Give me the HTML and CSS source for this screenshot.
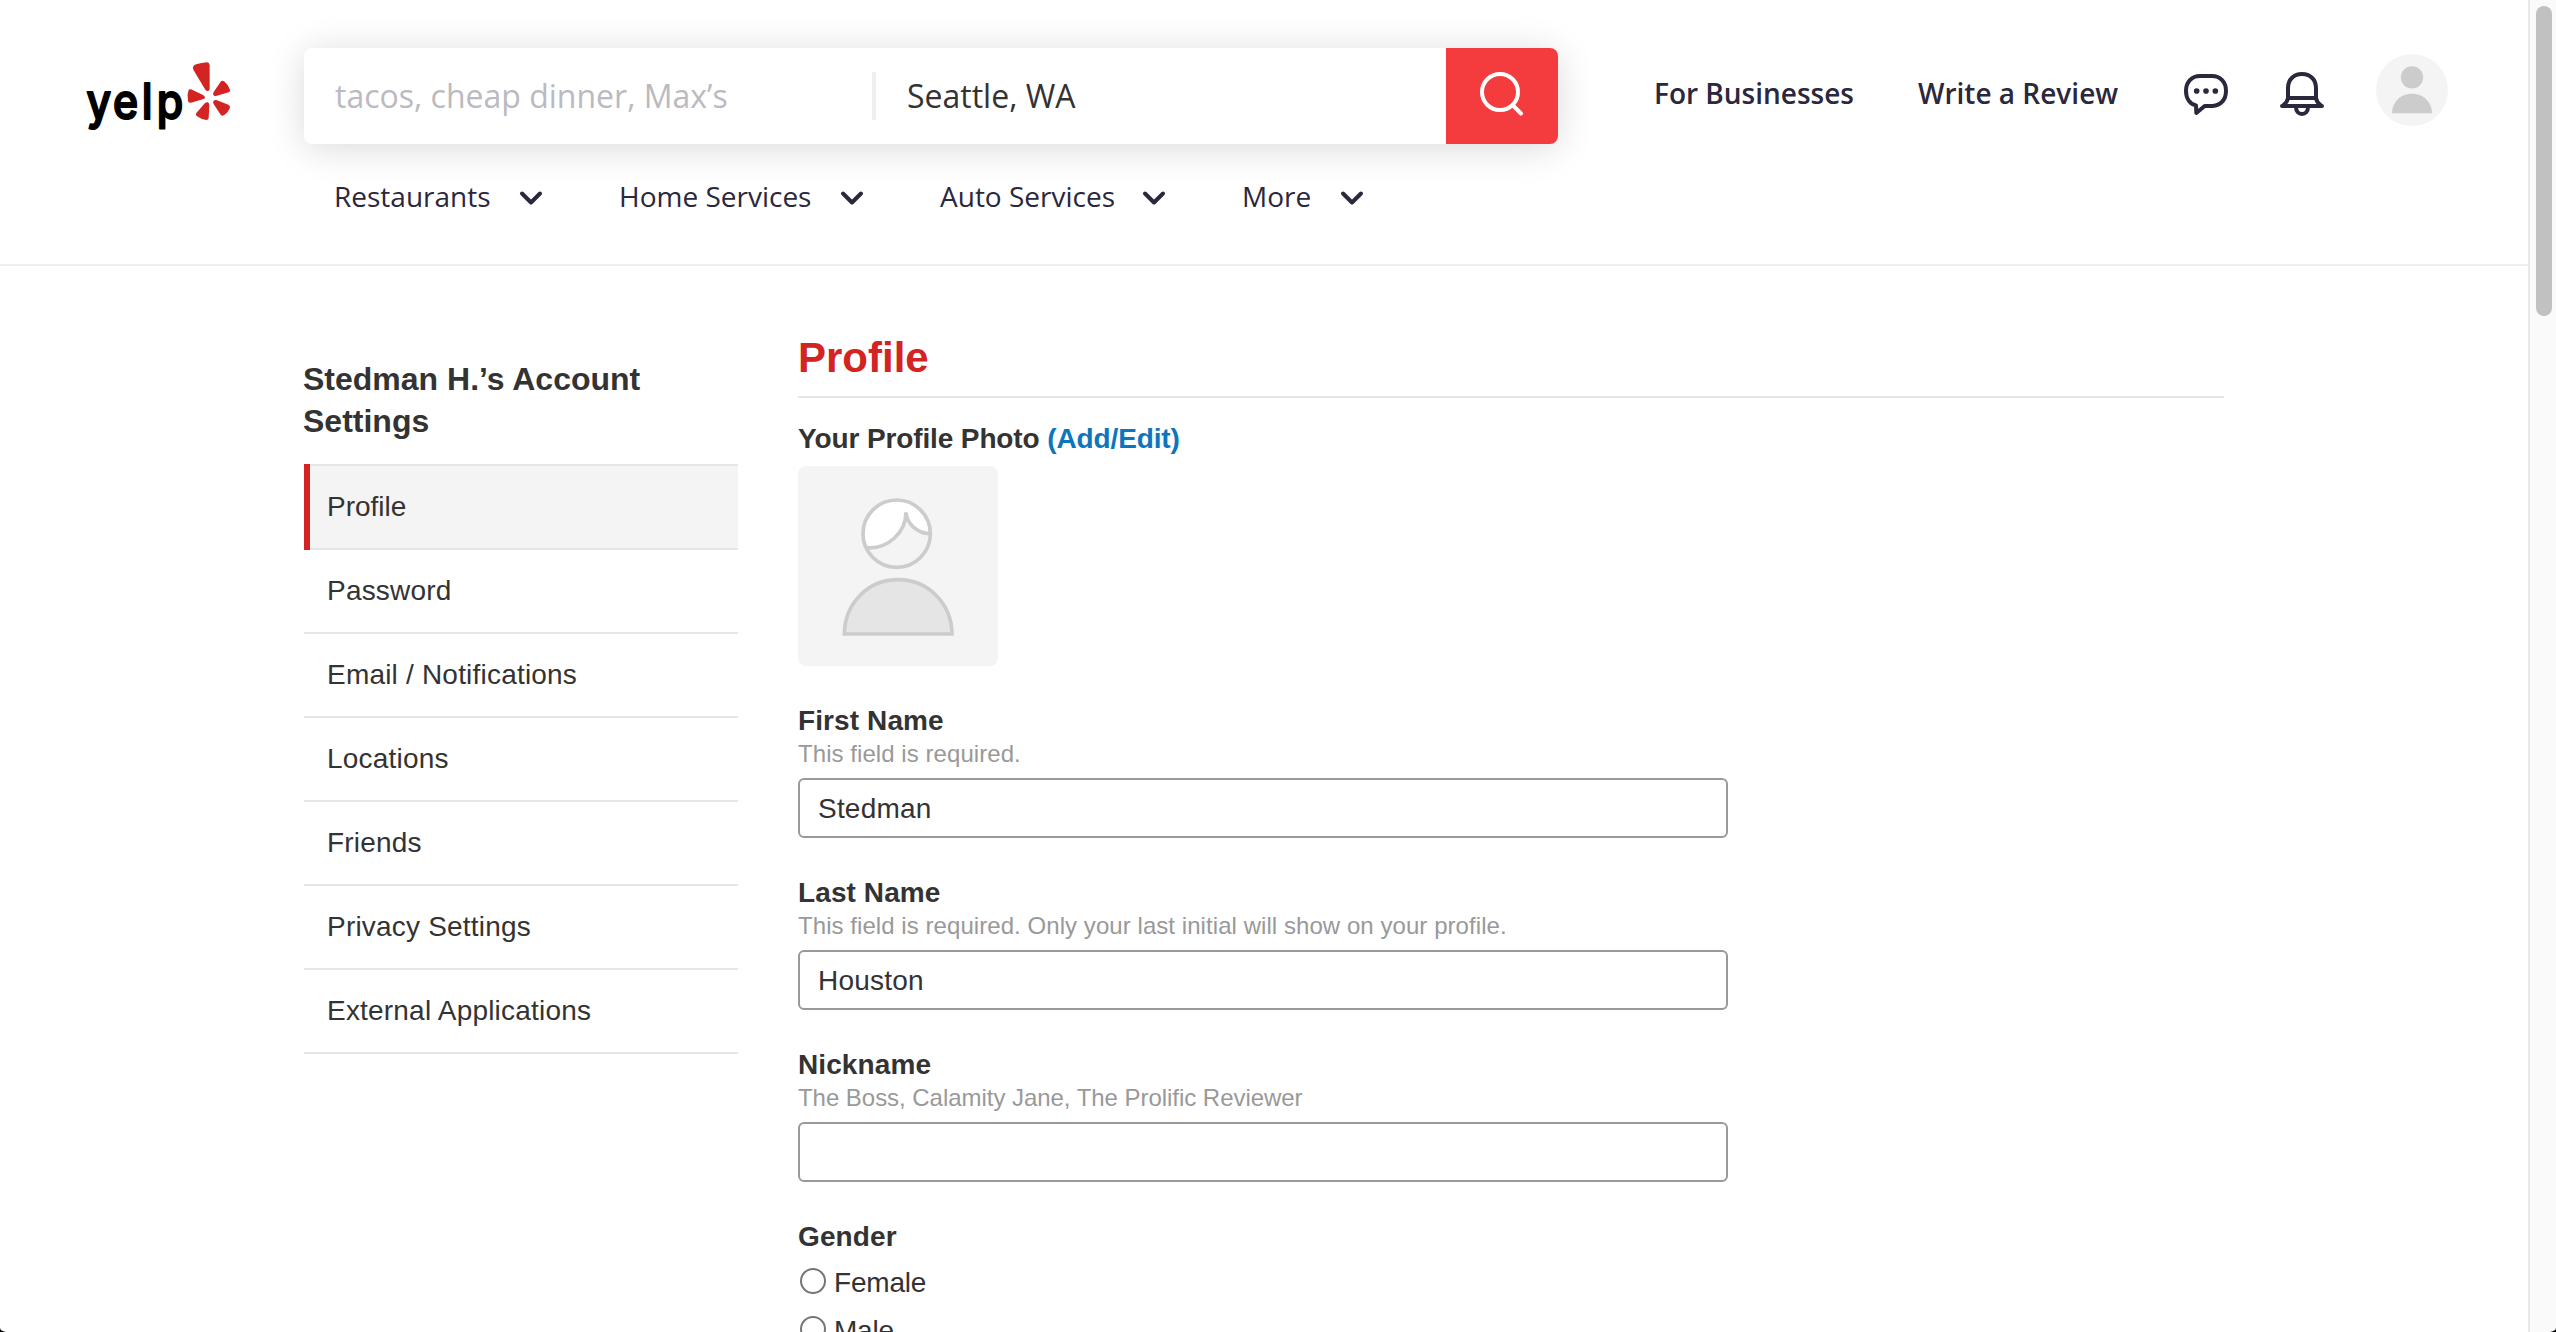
FILE: index.html
```
<!DOCTYPE html>
<html lang="en">
<head>
<meta charset="utf-8">
<title>Yelp - Account Settings</title>
<link rel="stylesheet" href="styles.css">
</head>
<body>
<div class="page">
  <header class="header">
    <a class="logo" aria-label="Yelp">
      <svg viewBox="72 90 444 216" width="148" height="72">
        <text class="logo-text" transform="scale(.88 1)" x="90 181 279 330" y="268">yelp</text>
        <g class="burst">
          <path d="M399 112Q400 106 408 103Q425 98 441 97Q448 97 449 105V176Q449 183 443 183Q439 183 436 179L400 119Q398 115 399 112Z"/>
          <path d="M386 179Q389 177 393 178L429 195Q435 198 435 203Q434 207 428 208L393 218Q386 220 384 213Q380 195 386 179Z"/>
          <path d="M483 154Q488 150 492 154Q504 163 510 179Q512 184 506 187L468 198Q462 199 460 195Q458 191 461 186Z"/>
          <path d="M460 214Q463 209 469 210L505 224Q511 227 510 233Q505 247 492 256Q486 259 482 254L461 222Q458 218 460 214Z"/>
          <path d="M435 219Q439 216 443 217Q448 219 448 225L446 264Q445 270 439 270Q422 267 410 258Q406 254 409 249Z"/>
        </g>
      </svg>
    </a>
    <div class="header-main">
      <form class="search">
        <span class="search-find">tacos, cheap dinner, Max’s</span>
        <span class="search-divider"></span>
        <span class="search-near">Seattle, WA</span>
        <button class="search-button" type="button" aria-label="Search">
          <svg viewBox="0 0 112 96" width="112" height="96" fill="none" stroke="#fff" stroke-width="4" stroke-linecap="round"><circle cx="54" cy="44" r="18"/><path d="M67 57.500l8 8"/></svg>
        </button>
      </form>
      <nav class="categories">
        <a class="category">Restaurants <svg class="chevron" viewBox="0 0 24 16"><path d="M3 3.500l9 9 9-9"/></svg></a>
        <a class="category">Home Services <svg class="chevron" viewBox="0 0 24 16"><path d="M3 3.500l9 9 9-9"/></svg></a>
        <a class="category">Auto Services <svg class="chevron" viewBox="0 0 24 16"><path d="M3 3.500l9 9 9-9"/></svg></a>
        <a class="category">More <svg class="chevron" viewBox="0 0 24 16"><path d="M3 3.500l9 9 9-9"/></svg></a>
      </nav>
    </div>
    <div class="user-bar">
      <a class="user-link">For Businesses</a>
      <a class="user-link review">Write a Review</a>
      <svg class="icon" viewBox="252 216 132 132"><path d="M300 228H336C361 228 378 246 378 272C378 300 361 317 338 318H314L289 339L288 316C270 312 258 296 258 272C258 246 275 228 300 228Z"/><g class="dots"><circle cx="290" cy="273" r="8.500"/><circle cx="318" cy="273" r="8.500"/><circle cx="346" cy="273" r="8.500"/></g></svg>
      <svg class="icon" viewBox="540 216 132 132"><path d="M564 294V264C564 238 582 222 606 222S648 238 648 264V294M564 294H648M564 294C563 302 558 310 549 317M648 294C649 302 654 310 663 317M546 318H666M588 322C588 334 596 342 606 342S624 334 624 322"/></svg>
      <svg class="avatar" viewBox="828 162 216 216"><circle cx="936" cy="270" r="108" fill="#f4f4f4"/><g fill="#ccc"><circle cx="936" cy="232" r="33.500"/><path d="M876 340C876 306 902 281 936 281S996 306 996 340Z"/></g></svg>
    </div>
  </header>
  <main class="content">
    <aside class="sidebar">
      <h2 class="sidebar-title">Stedman H.’s Account Settings</h2>
      <ul class="menu">
        <li class="menu-item active">Profile</li>
        <li class="menu-item">Password</li>
        <li class="menu-item">Email / Notifications</li>
        <li class="menu-item">Locations</li>
        <li class="menu-item">Friends</li>
        <li class="menu-item">Privacy Settings</li>
        <li class="menu-item">External Applications</li>
      </ul>
    </aside>
    <section class="profile">
      <h1 class="profile-title">Profile</h1>
      <div class="photo-label">Your Profile Photo <a class="link">(Add/Edit)</a></div>
      <svg class="photo" viewBox="54 438 600 600">
        <path fill="#fff" d="M260 684A101 101 0 1 1 451 640C414 639 381 611 378 577C377 640 322 690 260 684Z"/>
        <g fill="none" stroke="#ccc" stroke-width="11">
          <circle cx="350" cy="641" r="101"/>
          <path d="M260 683C323 688 378 638 378 577C381 611 411 640 449 641"/>
          <path fill="#e5e5e5" d="M193 942C194 851 263 779 354 779S515 851 516 942Z"/>
        </g>
      </svg>
      <div class="field">
        <label class="label" for="first">First Name</label>
        <span class="help">This field is required.</span>
        <input class="input" id="first" type="text" value="Stedman">
      </div>
      <div class="field">
        <label class="label" for="last">Last Name</label>
        <span class="help">This field is required. Only your last initial will show on your profile.</span>
        <input class="input" id="last" type="text" value="Houston">
      </div>
      <div class="field">
        <label class="label" for="nick">Nickname</label>
        <span class="help tight">The Boss, Calamity Jane, The Prolific Reviewer</span>
        <input class="input" id="nick" type="text">
      </div>
      <div class="field">
        <span class="label">Gender</span>
        <div class="options">
          <label class="option"><span class="radio"></span>Female</label>
          <label class="option"><span class="radio"></span>Male</label>
        </div>
      </div>
    </section>
  </main>
</div>
<div class="scrollbar"><div class="scrollbar-thumb"></div></div>
</body>
</html>
```
FILE: styles.css
```
* { box-sizing: border-box; }

body {
  display: flex;
  position: relative;
  height: 1332px;
  margin: 0;
  overflow: hidden;
  background: #fff;
  color: #333;
  font-family: "Liberation Sans", Arial, sans-serif;
  font-size: 28px;
}

/* rounded corners of the window */
body::before,
body::after {
  content: "";
  position: absolute;
  bottom: 0;
  width: 8px;
  height: 4px;
}
body::before { left: 0; background: radial-gradient(ellipse 8px 4px at 100% 0, transparent 90%, #000 110%); }
body::after { right: 0; background: radial-gradient(ellipse 8px 4px at 0 0, transparent 90%, #000 110%); }

.page { flex: 1; min-width: 0; }

/* header */
.header {
  display: flex;
  align-items: flex-start;
  height: 266px;
  padding-left: 84px;
  border-bottom: 2px solid #eee;
  color: #2b273c;
  font-family: "Open Sans", "Noto Sans", sans-serif;
}
.logo { width: 220px; padding-top: 60px; }
.logo svg { display: block; }
.logo-text {
  font: 500 146px Inter, sans-serif;
  fill: #000;
  stroke: #000;
  stroke-width: 6px;
  stroke-linejoin: round;
}
.burst { fill: #d32323; }
.header-main { width: 1254px; padding-top: 48px; }
.search {
  display: flex;
  align-items: center;
  height: 96px;
  border-radius: 8px;
  background: #fff;
  box-shadow: 0 4px 36px rgba(0, 0, 0, .15);
  font-size: 32px;
  line-height: 96px;
}
.search-find { width: 568px; padding-left: 31px; color: #bbbac0; }
.search-divider { width: 4px; height: 48px; background: #eee; }
.search-near { flex: 1; padding-left: 31px; color: #333; }
.search-button {
  width: 112px;
  height: 96px;
  padding: 0;
  border: 0;
  border-radius: 0 8px 8px 0;
  background: #f43c3f;
}
.search-button svg { display: block; }
.categories {
  display: grid;
  grid-template-columns: 285px 321px 302px 200px;
  padding: 32px 0 0 30px;
}
.category {
  display: flex;
  align-items: center;
  justify-content: space-between;
  padding-right: 76px;
  line-height: 40px;
}
.category:last-child { justify-content: flex-start; gap: 29px; }
.chevron {
  width: 24px;
  height: 16px;
  margin-top: 4px;
  fill: none;
  stroke: currentColor;
  stroke-width: 4px;
  stroke-linecap: round;
  stroke-linejoin: round;
}
.user-bar {
  display: flex;
  align-items: center;
  height: 188px;
  margin-left: 96px;
  font-weight: 600;
  line-height: 40px;
}
.user-link { padding-bottom: 2px; white-space: nowrap; }
.review { margin: 0 14px 0 64px; }
.icon {
  width: 44px;
  height: 44px;
  margin-left: 52px;
  fill: none;
  stroke: currentColor;
  stroke-width: 12px;
  stroke-linecap: round;
  stroke-linejoin: round;
}
.dots { fill: currentColor; stroke: none; }
.avatar { width: 72px; height: 72px; margin: 0 0 8px 52px; }

/* settings */
.content { display: flex; gap: 60px; padding: 64px 304px 0; }
.sidebar { width: 434px; padding-top: 28px; }
.sidebar-title { margin: 0 0 22px -1px; font-size: 32px; line-height: 42px; }
.menu { margin: 0; padding: 0; list-style: none; }
.menu-item {
  height: 84px;
  padding-left: 23px;
  border-bottom: 2px solid #e6e6e6;
  line-height: 82px;
  letter-spacing: .2px;
}
.menu-item.active {
  height: 86px;
  padding-top: 2px;
  border: 0;
  background: #f4f4f4;
  box-shadow: inset 6px 0 #d32323, inset 0 2px #e6e6e6, inset 0 -2px #e6e6e6;
  letter-spacing: 0;
}

.profile { width: 1426px; }
.profile-title {
  margin: 0 0 22px;
  padding-bottom: 10px;
  border-bottom: 2px solid #e6e6e6;
  color: #d32323;
  font-size: 42px;
  line-height: 56px;
}
.photo-label { font-weight: 700; line-height: 38px; letter-spacing: -.12px; }
.link { color: #0d75bd; }
.photo {
  display: block;
  width: 200px;
  height: 200px;
  margin: 8px 0 36px;
  border-radius: 8px;
  background: #f4f4f4;
}
.field { margin-bottom: 36px; }
.label { display: block; font-weight: 700; line-height: 38px; letter-spacing: .1px; }
.help { display: block; color: #999; font-size: 24px; line-height: 28px; letter-spacing: .06px; }
.help.tight { letter-spacing: -.04px; }
.input {
  display: block;
  width: 930px;
  height: 60px;
  margin-top: 10px;
  padding: 1px 18px 0;
  border: 2px solid #999;
  border-radius: 6px;
  background: #fff;
  color: #333;
  font: inherit;
  letter-spacing: .2px;
}
.options { padding: 3px 0 0 2px; }
.option { display: flex; align-items: center; height: 48px; gap: 8px; letter-spacing: -.2px; }
.radio {
  width: 26px;
  height: 26px;
  margin-bottom: 4px;
  border: 2px solid #767676;
  border-radius: 50%;
}

/* scrollbar */
.scrollbar {
  width: 28px;
  padding: 6px 4px 0 6px;
  border-left: 2px solid #e8e8e8;
  background: #fafafa;
}
.scrollbar-thumb { width: 16px; height: 310px; border-radius: 8px; background: #c1c1c1; }
```
